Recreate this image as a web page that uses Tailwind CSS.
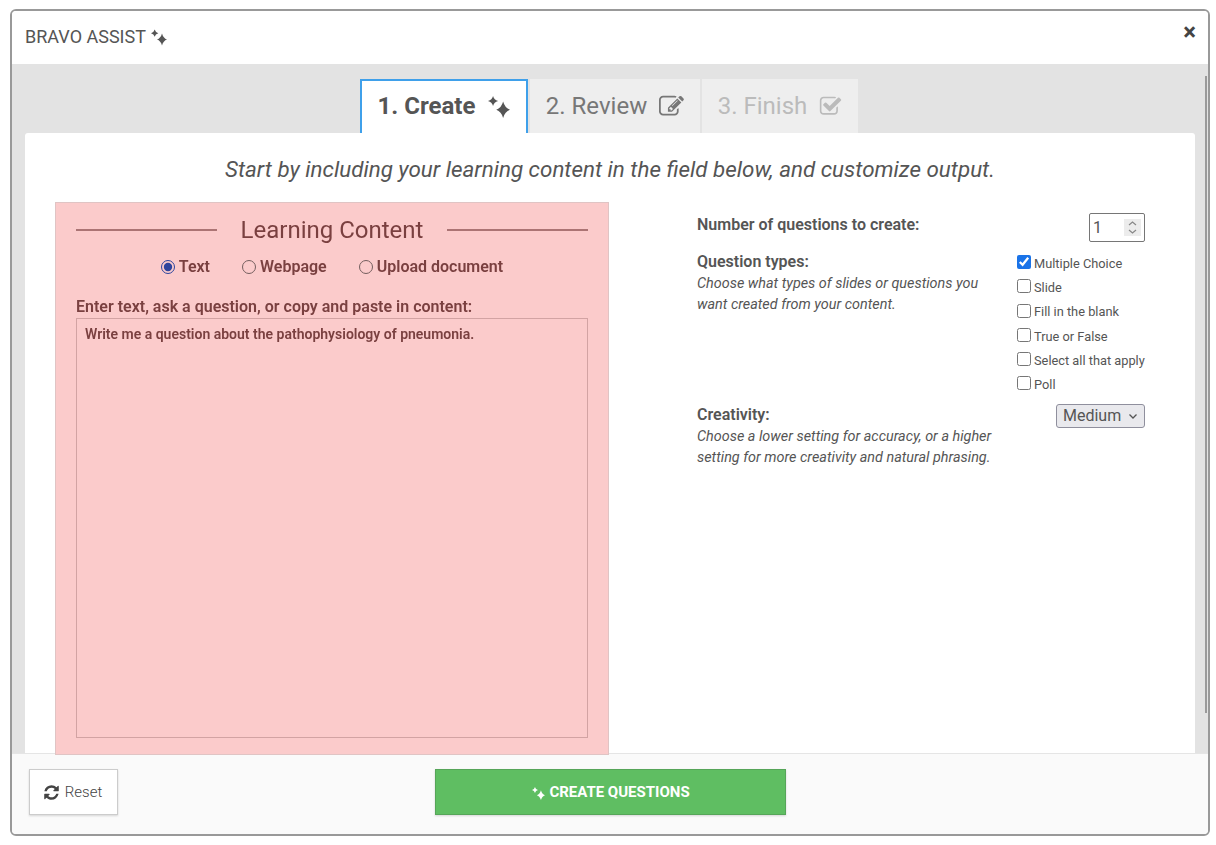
<!DOCTYPE html>
<html lang="en">

<head>
  <meta charset="UTF-8">
  <title>Bravo Assist</title>
  <script src="https://cdn.jsdelivr.net/npm/@tailwindcss/browser@4"></script>
</head>

<body class="bg-white font-['Roboto',sans-serif] text-[#555] overflow-hidden">
  <!-- shared sparkle icon -->
  <svg class="hidden">
    <symbol id="sparkles" viewBox="0 0 24 24">
      <path fill="currentColor" d="M16.500 6 Q18.400 13.100 24 15 Q18.400 16.900 16.500 24 Q14.600 16.900 9 15 Q14.600 13.100 16.500 6Z M5.500 0 Q6.600 4.400 11 5.500 Q6.600 6.600 5.500 11 Q4.400 6.600 0 5.500 Q4.400 4.400 5.500 0Z" />
    </symbol>
  </svg>

  <div class="relative ml-[10px] mt-[9px] w-[1200px] h-[827px] border-2 border-[#999] rounded-[6px] bg-white flex flex-col overflow-hidden">
    <!-- header -->
    <div class="h-[53px] shrink-0 flex items-center justify-between pl-[13px] pr-[12px] bg-white">
      <div class="flex items-center gap-[5px] text-[18px] text-[#555] mb-[3px]">
        BRAVO ASSIST
        <svg class="w-[16px] h-[17px] mt-[2px] text-[#555]"><use href="#sparkles" /></svg>
      </div>
      <span class="text-[24px] font-bold text-[#444] leading-none mb-[11px]">×</span>
    </div>

    <!-- body -->
    <div class="relative h-[689px] shrink-0 bg-[#e3e3e3] px-[13px] pt-[15px]">
      <div class="absolute right-[1px] top-[12px] w-[2px] h-[637px] bg-[#9a9a9a]"></div>

      <!-- tabs -->
      <div class="flex justify-center gap-[2px] h-[54px] pr-[2px]">
        <div class="w-[168px] flex items-center justify-center gap-[13px] bg-white border-2 border-b-0 border-[#3fa0ea] pb-[2px] text-[24px] font-bold text-[#555]">
          1. Create
          <svg class="w-[22px] h-[22px] mt-[2px]"><use href="#sparkles" /></svg>
        </div>
        <div class="w-[170px] flex items-center justify-center gap-[12px] bg-[#eee] text-[24px] text-[#777]">
          2. Review
          <svg class="w-[25px] h-[25px]" viewBox="0 0 1792 1792"><path fill="currentColor" d="M888 1184l116-116-152-152-116 116v56h96v96h56zm440-720q-16-16-33 1l-350 350q-17 17-1 33t33-1l350-350q17-17 1-33zm80 594v190q0 119-84.5 203.5t-203.5 84.5h-832q-119 0-203.5-84.5t-84.5-203.5v-832q0-119 84.5-203.5t203.5-84.5h832q63 0 117 25 15 7 18 23 3 17-9 29l-49 49q-14 14-32 8-23-6-45-6h-832q-66 0-113 47t-47 113v832q0 66 47 113t113 47h832q66 0 113-47t47-113v-126q0-13 9-22l64-64q15-15 35-7t20 29zm-96-738l288 288-672 672h-288v-288zm444 132l-92 92-288-288 92-92q28-28 68-28t68 28l152 152q28 28 28 68t-28 68z" /></svg>
        </div>
        <div class="w-[156px] flex items-center justify-center gap-[12px] bg-[#eee] text-[24px] text-[#bbb]">
          3. Finish
          <svg class="w-[23px] h-[23px]" viewBox="0 0 1792 1792"><path fill="currentColor" d="M1472 930v318q0 119-84.5 203.5t-203.5 84.5h-832q-119 0-203.5-84.5t-84.5-203.5v-832q0-119 84.5-203.5t203.5-84.5h832q63 0 117 25 15 7 18 23 3 17-9 29l-49 49q-10 10-23 10-3 0-9-2-23-6-45-6h-832q-66 0-113 47t-47 113v832q0 66 47 113t113 47h832q66 0 113-47t47-113v-254q0-13 9-22l64-64q10-10 23-10 6 0 12 3 20 8 20 29zm231-489l-814 814q-24 24-57 24t-57-24l-430-430q-24-24-24-57t24-57l110-110q24-24 57-24t57 24l263 263 647-647q24-24 57-24t57 24l110 110q24 24 24 57t-24 57z" /></svg>
        </div>
      </div>

      <!-- panel -->
      <div class="w-[1170px] h-[620px] bg-white rounded-t-[3px]">
        <p class="pt-[22px] h-[69px] text-center text-[22.4px] italic leading-[29px] text-[#555]">Start by including your learning content in the field below, and customize output.</p>

        <div class="flex pl-[30px]">
          <!-- learning content -->
          <div class="relative z-10 w-[554px] h-[553px] shrink-0 bg-[#fbcbcb] border border-[#e0c4c4] px-[20px] pt-[11px] text-[#7a4040]">
            <div class="flex items-center gap-[24px] h-[32px]">
              <div class="flex-1 h-[2px] bg-[#ab7474]"></div>
              <h2 class="text-[24px] leading-[32px]">Learning Content</h2>
              <div class="flex-1 h-[2px] bg-[#ab7474]"></div>
            </div>
            <div class="flex justify-center gap-[32px] mt-[9px] h-[24px] items-center text-[16px] font-semibold">
              <label class="flex items-center gap-[4px]"><input type="radio" name="source" checked class="m-0 w-[14px] h-[14px] accent-[#2e55c5] mix-blend-multiply"> Text</label>
              <label class="flex items-center gap-[4px]"><input type="radio" name="source" class="m-0 w-[14px] h-[14px] mix-blend-multiply"> Webpage</label>
              <label class="flex items-center gap-[4px]"><input type="radio" name="source" class="m-0 w-[14px] h-[14px] mix-blend-multiply"> Upload document</label>
            </div>
            <label class="block mt-[17px] text-[16px] leading-[22px] font-semibold">Enter text, ask a question, or copy and paste in content:</label>
            <div class="h-[420px] border border-[#d2a3a3] px-[8px] py-[5px] text-[14px] leading-[20px] font-semibold">Write me a question about the pathophysiology of pneumonia.</div>
          </div>

          <!-- options -->
          <div class="ml-[88px] w-[448px] pt-[11px] text-[#555]">
            <div class="flex justify-between h-[38px]">
              <span class="text-[16px] font-semibold leading-[24px]">Number of questions to create:</span>
              <div class="w-[56px] h-[29px] border border-[#767676] rounded-[2px] flex items-center pl-[3px] pr-[3px] justify-between text-[16px]">
                1
                <svg class="w-[17px] h-[17px] bg-[#ececec]" viewBox="0 0 17 17"><path d="M5 6l3.500-3 3.500 3M5 11l3.500 3 3.500-3" fill="none" stroke="#888" stroke-width="1.200" /></svg>
              </div>
            </div>

            <div class="flex justify-between h-[153px]">
              <div class="w-[300px]">
                <span class="block text-[16px] font-semibold leading-[22px]">Question types:</span>
                <p class="text-[14.4px] italic leading-[21px]">Choose what types of slides or questions you want created from your content.</p>
              </div>
              <ul class="w-[128px] text-[12.8px] leading-[24.2px] pt-[1px] whitespace-nowrap">
                <li class="flex items-center gap-[3px]"><input type="checkbox" checked class="m-0 mb-[4px] w-[14px] h-[14px] accent-[#1a73e8]"> Multiple Choice</li>
                <li class="flex items-center gap-[3px]"><input type="checkbox" class="m-0 mb-[4px] w-[14px] h-[14px]"> Slide</li>
                <li class="flex items-center gap-[3px]"><input type="checkbox" class="m-0 mb-[4px] w-[14px] h-[14px]"> Fill in the blank</li>
                <li class="flex items-center gap-[3px]"><input type="checkbox" class="m-0 mb-[4px] w-[14px] h-[14px]"> True or False</li>
                <li class="flex items-center gap-[3px]"><input type="checkbox" class="m-0 mb-[4px] w-[14px] h-[14px]"> Select all that apply</li>
                <li class="flex items-center gap-[3px]"><input type="checkbox" class="m-0 mb-[4px] w-[14px] h-[14px]"> Poll</li>
              </ul>
            </div>

            <div class="flex justify-between">
              <div class="w-[300px]">
                <span class="block text-[16px] font-semibold leading-[22px]">Creativity:</span>
                <p class="text-[14.4px] italic leading-[21px]">Choose a lower setting for accuracy, or a higher setting for more creativity and natural phrasing.</p>
              </div>
              <div class="w-[89px] h-[24px] flex items-center justify-between pl-[6px] pr-[6px] bg-[#e9e9ed] border border-[#8f8f9d] rounded-[3px] text-[16px]">
                Medium
                <svg class="w-[10px] h-[10px]" viewBox="0 0 10 10"><path d="M1.500 3.500 5 7l3.500-3.500" fill="none" stroke="#555" stroke-width="1.300" /></svg>
              </div>
            </div>
          </div>
        </div>
      </div>
    </div>

    <!-- footer -->
    <div class="flex-1 bg-[#fafafa] border-t border-[#e5e5e5] relative flex items-center justify-center">
      <button class="absolute left-[17px] top-[15px] w-[89px] h-[46px] pr-[2px] flex items-center justify-center gap-[5px] bg-white border border-[#ccc] shadow-[0_1px_2px_rgba(0,0,0,0.15)] text-[15px] font-light text-[#444]">
        <svg class="w-[17px] h-[17px] text-[#444]" viewBox="0 0 1792 1792"><path fill="currentColor" d="M1639 1056q0 5-1 7-64 268-268 434.5t-478 166.5q-146 0-282.5-55t-243.5-157l-129 129q-19 19-45 19t-45-19-19-45v-448q0-26 19-45t45-19h448q26 0 45 19t19 45-19 45l-137 137q71 66 161 102t187 36q134 0 250-65t186-179q11-17 53-117 8-23 30-23h192q13 0 22.5 9.5t9.5 22.5zm25-800v448q0 26-19 45t-45 19h-448q-26 0-45-19t-19-45 19-45l138-138q-148-137-349-137-134 0-250 65t-186 179q-11 17-53 117-8 23-30 23h-199q-13 0-22.5-9.5t-9.5-22.5v-7q65-268 270-434.5t480-166.5q146 0 284 55.5t245 156.5l130-129q19-19 45-19t45 19 19 45z" /></svg>
        Reset
      </button>
      <button class="w-[351px] h-[46px] mt-[-5px] pl-[2px] pt-[2px] flex items-center justify-center gap-[4px] bg-[#5fbe62] border border-[#56a559] shadow-[0_1px_2px_rgba(0,0,0,0.15)] text-[15px] font-bold text-white">
        <svg class="w-[13px] h-[13px] mt-[2px]"><use href="#sparkles" /></svg>
        CREATE QUESTIONS
      </button>
    </div>
  </div>
</body>

</html>
